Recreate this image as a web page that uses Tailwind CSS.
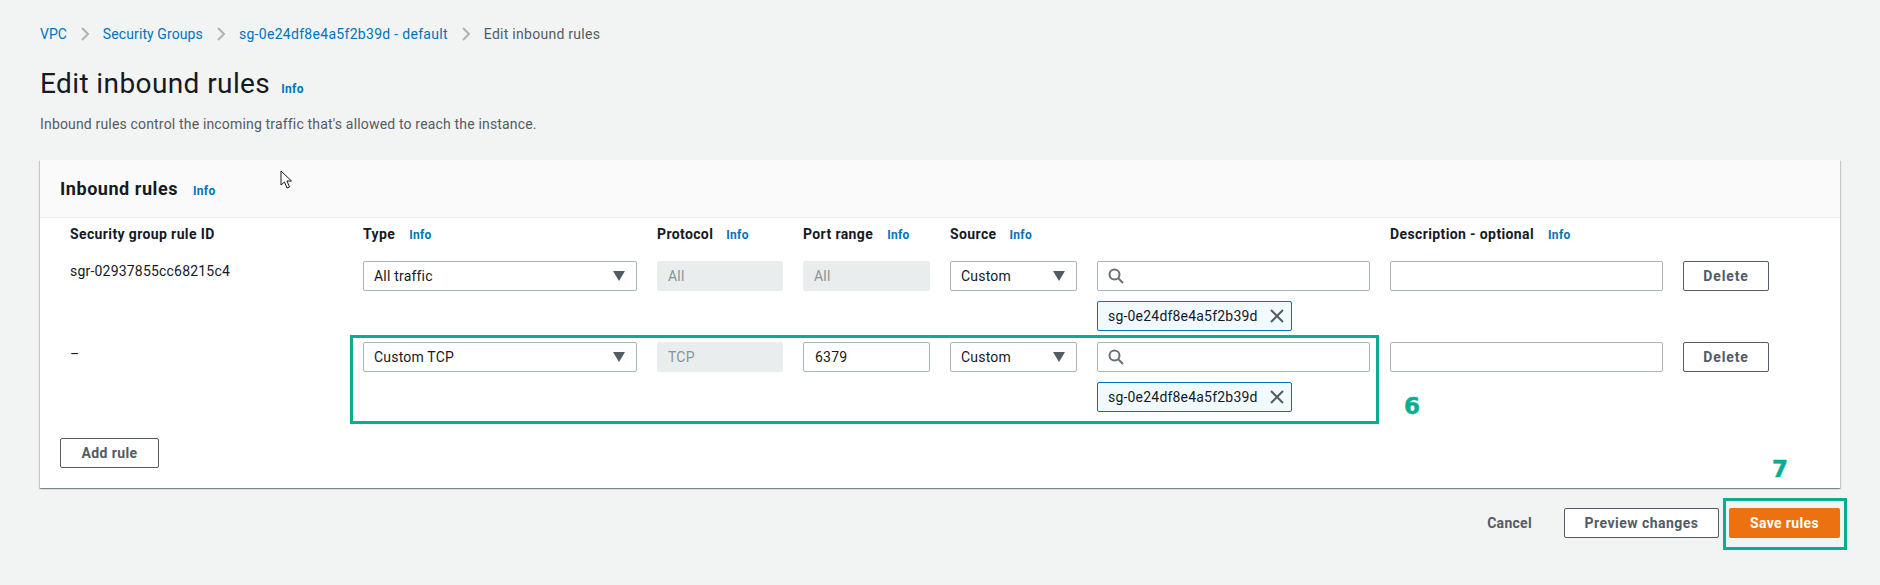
<!doctype html>
<html>
<head>
<meta charset="utf-8">
<script src="https://cdn.jsdelivr.net/npm/@tailwindcss/browser@4"></script>
</head>
<body class="m-0 bg-[#f2f3f3] font-['Roboto',sans-serif] text-[14px] leading-[22px] tracking-[0.2px] text-[#16191f] overflow-hidden">
<div class="relative w-[1880px] h-[585px] px-10 pt-[23px]">
  <!-- breadcrumb -->
  <nav class="flex items-center h-[22px] text-[#0073bb]">
    <span class="tracking-normal">VPC</span>
    <svg class="w-[8px] h-[14px] mx-[14px] text-[#aab7b8]" viewBox="0 0 8 14" fill="none" stroke="currentColor" stroke-width="2"><path d="M1 1l6 6-6 6"/></svg>
    <span class="tracking-[0.1px]">Security Groups</span>
    <svg class="w-[8px] h-[14px] mx-[14px] text-[#aab7b8]" viewBox="0 0 8 14" fill="none" stroke="currentColor" stroke-width="2"><path d="M1 1l6 6-6 6"/></svg>
    <span class="tracking-[0.3px]">sg-0e24df8e4a5f2b39d - default</span>
    <svg class="w-[8px] h-[14px] mx-[14px] text-[#aab7b8]" viewBox="0 0 8 14" fill="none" stroke="currentColor" stroke-width="2"><path d="M1 1l6 6-6 6"/></svg>
    <span class="tracking-[0.27px] text-[#545b64]">Edit inbound rules</span>
  </nav>
  <!-- heading -->
  <div class="flex items-baseline mt-[22px] h-[34px]">
    <h1 class="text-[28px] leading-[34px] font-normal tracking-[0.4px]">Edit inbound rules</h1>
    <span class="ml-[11px] text-[12px] font-bold tracking-[0.3px] text-[#0073bb]">Info</span>
  </div>
  <p class="mt-[12px] tracking-[0.17px] text-[#545b64]">Inbound rules control the incoming traffic that's allowed to reach the instance.</p>
  <!-- card -->
  <section class="mt-[25px] bg-white shadow-[0_1px_1px_0_rgba(0,28,36,0.3),1px_1px_1px_0_rgba(0,28,36,0.15),-1px_1px_1px_0_rgba(0,28,36,0.15)]">
    <header class="flex items-baseline h-[58px] pl-5 pt-[18px] bg-[#fafafa] border-b border-[#eaeded]">
      <h2 class="text-[18px] leading-[22px] font-bold tracking-[0.55px]">Inbound rules</h2>
      <span class="ml-[15px] text-[12px] font-bold tracking-[0.3px] text-[#0073bb]">Info</span>
    </header>
    <div class="grid grid-cols-[273px_274px_126px_127px_127px_273px_273px_86px] gap-x-5 pl-[30px] pt-[5px] pb-5">
      <!-- labels -->
      <div class="font-bold tracking-[0.38px] h-[22px] mb-4">Security group rule ID</div>
      <div class="font-bold tracking-[0.38px] h-[22px] mb-4 flex items-baseline gap-[14px]">Type <span class="text-[12px] tracking-[0.3px] text-[#0073bb]">Info</span></div>
      <div class="font-bold tracking-[0.38px] h-[22px] mb-4 flex items-baseline gap-[13px]">Protocol <span class="text-[12px] tracking-[0.3px] text-[#0073bb]">Info</span></div>
      <div class="font-bold tracking-[0.38px] h-[22px] mb-4 flex items-baseline gap-[14px]">Port range <span class="text-[12px] tracking-[0.3px] text-[#0073bb]">Info</span></div>
      <div class="font-bold tracking-[0.38px] h-[22px] mb-4 flex items-baseline gap-[13px]">Source <span class="text-[12px] tracking-[0.3px] text-[#0073bb]">Info</span></div>
      <div></div>
      <div class="font-bold tracking-[0.38px] h-[22px] mb-4 flex items-baseline gap-[14px]">Description - optional <span class="text-[12px] tracking-[0.3px] text-[#0073bb]">Info</span></div>
      <div></div>

      <!-- row 1 -->
      <div class="leading-[20px]">sgr-02937855cc68215c4</div>
      <div class="h-[30px] px-[10px] flex items-center justify-between bg-white border border-[#aab7b8] rounded-[2px]">All traffic
        <svg class="w-[12px] h-[10px] mr-[1px] text-[#545b64]" viewBox="0 0 12 10" fill="currentColor"><path d="M0 0h12L6 10z"/></svg>
      </div>
      <div class="h-[30px] px-[11px] flex items-center bg-[#eaeded] rounded-[2px] text-[#879596]">All</div>
      <div class="h-[30px] px-[11px] flex items-center bg-[#eaeded] rounded-[2px] text-[#879596]">All</div>
      <div class="h-[30px] px-[10px] flex items-center justify-between bg-white border border-[#aab7b8] rounded-[2px]">Custom
        <svg class="w-[12px] h-[10px] mr-[1px] text-[#545b64]" viewBox="0 0 12 10" fill="currentColor"><path d="M0 0h12L6 10z"/></svg>
      </div>
      <div>
        <div class="h-[30px] px-[10px] flex items-center bg-white border border-[#aab7b8] rounded-[2px]">
          <svg class="w-[16px] h-[16px] text-[#687078]" viewBox="0 0 16 16" fill="none" stroke="currentColor" stroke-width="2"><circle cx="6.5" cy="6.5" r="5"/><path d="M10.5 10.5l4.5 4.5"/></svg>
        </div>
        <div class="mt-[10px] w-[195px] h-[30px] pl-[10px] pr-[7px] flex items-center justify-between bg-[#f1faff] border border-[#0073bb] rounded-[2px]">sg-0e24df8e4a5f2b39d
          <svg class="w-[14px] h-[14px] text-[#545b64]" viewBox="0 0 14 14" fill="none" stroke="currentColor" stroke-width="2"><path d="M1 1l12 12M13 1L1 13"/></svg>
        </div>
      </div>
      <div class="h-[30px] bg-white border border-[#aab7b8] rounded-[2px]"></div>
      <div class="h-[30px] flex items-center justify-center bg-white border border-[#545b64] rounded-[2px] font-bold tracking-[0.9px] text-[#545b64]">Delete</div>

      <!-- row 2 -->
      <div class="mt-[13px] leading-[20px]">–</div>
      <div class="mt-[11px] h-[30px] px-[10px] flex items-center justify-between bg-white border border-[#aab7b8] rounded-[2px]">Custom TCP
        <svg class="w-[12px] h-[10px] mr-[1px] text-[#545b64]" viewBox="0 0 12 10" fill="currentColor"><path d="M0 0h12L6 10z"/></svg>
      </div>
      <div class="mt-[11px] h-[30px] px-[11px] flex items-center bg-[#eaeded] rounded-[2px] text-[#879596]">TCP</div>
      <div class="mt-[11px] h-[30px] px-[11px] flex items-center bg-white border border-[#aab7b8] rounded-[2px]">6379</div>
      <div class="mt-[11px] h-[30px] px-[10px] flex items-center justify-between bg-white border border-[#aab7b8] rounded-[2px]">Custom
        <svg class="w-[12px] h-[10px] mr-[1px] text-[#545b64]" viewBox="0 0 12 10" fill="currentColor"><path d="M0 0h12L6 10z"/></svg>
      </div>
      <div class="mt-[11px]">
        <div class="h-[30px] px-[10px] flex items-center bg-white border border-[#aab7b8] rounded-[2px]">
          <svg class="w-[16px] h-[16px] text-[#687078]" viewBox="0 0 16 16" fill="none" stroke="currentColor" stroke-width="2"><circle cx="6.5" cy="6.5" r="5"/><path d="M10.5 10.5l4.5 4.5"/></svg>
        </div>
        <div class="mt-[10px] w-[195px] h-[30px] pl-[10px] pr-[7px] flex items-center justify-between bg-[#f1faff] border border-[#0073bb] rounded-[2px]">sg-0e24df8e4a5f2b39d
          <svg class="w-[14px] h-[14px] text-[#545b64]" viewBox="0 0 14 14" fill="none" stroke="currentColor" stroke-width="2"><path d="M1 1l12 12M13 1L1 13"/></svg>
        </div>
      </div>
      <div class="mt-[11px] h-[30px] bg-white border border-[#aab7b8] rounded-[2px]"></div>
      <div class="mt-[11px] h-[30px] flex items-center justify-center bg-white border border-[#545b64] rounded-[2px] font-bold tracking-[0.9px] text-[#545b64]">Delete</div>
    </div>
    <div class="pl-5 pt-[6px] pb-5">
      <button class="block w-[99px] h-[30px] bg-white border border-[#545b64] rounded-[2px] font-bold tracking-[0.4px] text-[#545b64]">Add rule</button>
    </div>
  </section>
  <!-- footer -->
  <div class="flex justify-end items-center mt-5 h-[30px]">
    <span class="mr-[32px] font-bold tracking-[0.3px] text-[#545b64]">Cancel</span>
    <button class="w-[155px] h-[30px] mr-[10px] bg-white border border-[#545b64] rounded-[2px] font-bold tracking-[0.47px] text-[#545b64]">Preview changes</button>
    <button class="w-[111px] h-[30px] bg-[#ec7211] rounded-[2px] font-bold tracking-[0.36px] text-white">Save rules</button>
  </div>

  <!-- annotations over the screenshot -->
  <div class="absolute left-[350px] top-[335px] w-[1029px] h-[89px] border-[3px] border-[#0aad8f]"></div>
  <div class="absolute left-[1723px] top-[498px] w-[124px] h-[52px] border-[3px] border-[#0aad8f]"></div>
  <span class="absolute left-[1404px] top-[393px] font-['DejaVu_Sans'] font-bold tracking-normal text-[23px] leading-[27px] [-webkit-text-stroke:0.5px_#0aad8f] text-[#0aad8f]">6</span>
  <span class="absolute left-[1772px] top-[456px] font-['DejaVu_Sans'] font-bold tracking-normal text-[23px] leading-[27px] [-webkit-text-stroke:0.5px_#0aad8f] text-[#0aad8f]">7</span>
  <svg class="absolute left-[280px] top-[170px] w-[13px] h-[19px]" viewBox="0 0 13 19" fill="#fff" stroke="#16191f" stroke-width="1"><path d="M1 1v14l3.5-3 2.5 6 2.5-1-2.5-6h4.500z"/></svg>
</div>
</body>
</html>
